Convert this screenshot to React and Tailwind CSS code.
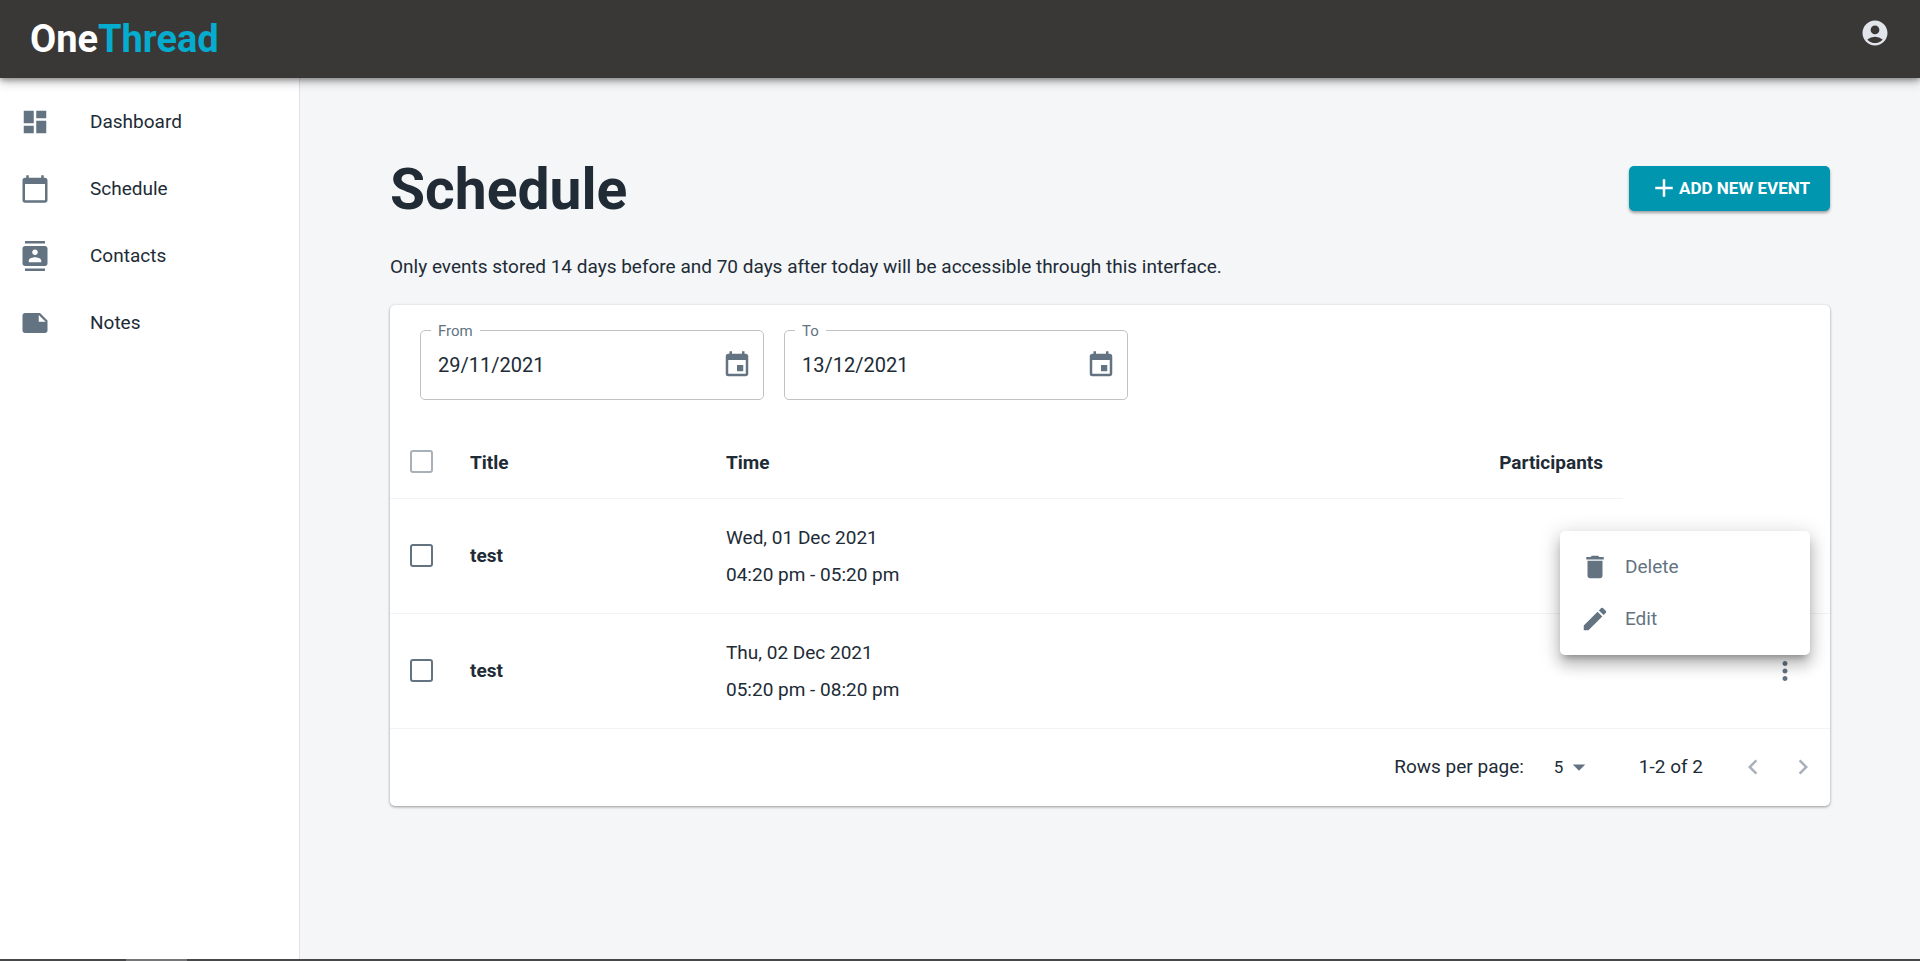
import React, { useState } from "react";
import {
    MdAccountCircle,
    MdAdd,
    MdArrowDropDown,
    MdCalendarToday,
    MdChevronLeft,
    MdChevronRight,
    MdContacts,
    MdDashboard,
    MdDelete,
    MdEdit,
    MdEvent,
    MdMoreVert,
    MdNote,
} from "react-icons/md";

const links = [
    { name: "Dashboard", icon: MdDashboard },
    { name: "Schedule", icon: MdCalendarToday },
    { name: "Contacts", icon: MdContacts },
    { name: "Notes", icon: MdNote },
];

const events = [
    { id: 1, title: "test", date: "Wed, 01 Dec 2021", time: "04:20 pm - 05:20 pm" },
    { id: 2, title: "test", date: "Thu, 02 Dec 2021", time: "05:20 pm - 08:20 pm" },
];

const Header = () => (
    <header className="relative z-10 h-[78px] px-[30px] flex items-start justify-between bg-[#3a3836] shadow-[0_2px_5px_rgba(0,0,0,0.3),0_4px_10px_rgba(0,0,0,0.25)]">
        <a href="#" className="self-center text-[38px] leading-[78px] font-bold text-white">
            One<span className="text-[#05acce]">Thread</span>
        </a>
        <button type="button" aria-label="Account" className="mt-[18px] text-[#e1e4ea]">
            <MdAccountCircle className="size-[30px]" />
        </button>
    </header>
);

const Sidebar = () => (
    <nav className="w-[300px] shrink-0 pt-[10px] bg-white border-r border-[#e0e2e5]">
        {links.map(({ name, icon: Icon }) => (
            <a key={name} href="#" className="flex items-center gap-10 h-[67px] px-5 text-[#212b36]">
                <Icon className="size-[30px] text-[#637381]" />
                {name}
            </a>
        ))}
    </nav>
);

const DateField = ({ id, label, initial }) => {
    const [value, setValue] = useState(initial);

    return (
        <div className="relative flex items-center w-[344px] h-[70px] pl-[17px] pr-[11px] border border-[#c0c2c5] rounded-[5px]">
            <label htmlFor={id} className="absolute -top-[10px] left-[10px] px-[7px] text-[15px] leading-5 bg-white text-[#637381]">
                {label}
            </label>
            <input
                id={id}
                type="text"
                value={value}
                onChange={(e) => setValue(e.target.value)}
                className="flex-1 min-w-0 bg-transparent outline-none text-xl"
            />
            <button type="button" aria-label={`Choose ${label} date`} className="text-[#637381]">
                <MdEvent className="size-[30px]" />
            </button>
        </div>
    );
};

const Checkbox = ({ label, className }) => (
    <input
        type="checkbox"
        aria-label={label}
        className={`block appearance-none size-[23px] rounded-[3px] border-2 checked:bg-[#0096b0] ${className}`}
    />
);

const RowMenu = () => (
    <div className="absolute z-10 top-[33px] right-5 w-[250px] py-[10px] bg-white rounded-[5px] text-[#637381] shadow-[0_6px_7px_-4px_rgba(0,0,0,0.3),0_10px_14px_1px_rgba(0,0,0,0.16),0_4px_20px_3px_rgba(0,0,0,0.14)]">
        <button type="button" className="flex items-center gap-[15px] w-full h-[52px] px-5">
            <MdDelete className="size-[30px]" />
            Delete
        </button>
        <button type="button" className="flex items-center gap-[15px] w-full h-[52px] px-5">
            <MdEdit className="size-[30px]" />
            Edit
        </button>
    </div>
);

const EventTable = () => {
    const [openMenu, setOpenMenu] = useState(1);

    return (
        <table className="w-full table-fixed text-left border-collapse">
            <thead>
                <tr className="h-[69px] [&>th]:border-b [&>th]:border-[#f1f3f4]">
                    <th className="w-[60px] pl-5 pb-1">
                        <Checkbox label="Select all" className="border-[#a8b1ba]" />
                    </th>
                    <th className="w-[256px] px-5 font-bold">Title</th>
                    <th className="px-5 font-bold">Time</th>
                    <th className="w-[300px] px-5 text-right font-bold">Participants</th>
                    <td className="w-[207px]"></td>
                </tr>
            </thead>
            <tbody>
                {events.map((event) => (
                    <tr key={event.id} className="relative h-[115px] border-b border-[#f1f3f4]">
                        <td className="pl-5">
                            <Checkbox label={`Select ${event.title}`} className="border-[#637381]" />
                        </td>
                        <td className="px-5 font-bold">{event.title}</td>
                        <td className="px-5 leading-[37px]">
                            <p>{event.date}</p>
                            <p>{event.time}</p>
                        </td>
                        <td></td>
                        <td className="px-[30px]">
                            <button
                                type="button"
                                aria-label="More options"
                                className="block ml-auto text-[#637381]"
                                onClick={() => setOpenMenu(openMenu === event.id ? null : event.id)}
                            >
                                <MdMoreVert className="size-[30px]" />
                            </button>
                            {openMenu === event.id && <RowMenu />}
                        </td>
                    </tr>
                ))}
            </tbody>
        </table>
    );
};

const Pagination = () => (
    <div className="flex items-center justify-end h-[77px] pr-3">
        <label htmlFor="rows">Rows per page:</label>
        <div className="relative ml-[30px] mr-[45px] text-[17px]">
            <select id="rows" defaultValue="5" className="appearance-none w-[40px] bg-transparent outline-none">
                <option>5</option>
                <option>10</option>
                <option>25</option>
            </select>
            <MdArrowDropDown className="absolute top-0 right-0 size-[30px] pointer-events-none text-[#637381]" />
        </div>
        <span>1-2 of 2</span>
        <button type="button" disabled aria-label="Previous page" className="ml-[35px] text-[#a8b1ba]">
            <MdChevronLeft className="size-[30px]" />
        </button>
        <button type="button" disabled aria-label="Next page" className="ml-5 text-[#a8b1ba]">
            <MdChevronRight className="size-[30px]" />
        </button>
    </div>
);

const App = () => {
    return (
        <div className="min-h-screen flex flex-col font-[Roboto,sans-serif] text-[19px] leading-[30px] text-[#212b36] bg-[#f4f6f8]">
            <Header />
            <div className="flex flex-1">
                <Sidebar />
                <main className="flex-1 min-w-0 px-[90px] pt-[70px]">
                    <div className="flex items-center justify-between">
                        <h1 className="pt-1 text-[57px] leading-[76px] font-bold">Schedule</h1>
                        <button
                            type="button"
                            className="flex items-center h-[45px] px-5 rounded-[5px] bg-[#0096b0] text-white text-[17px] font-bold shadow-[0_2px_3px_rgba(0,0,0,0.35)]"
                        >
                            <MdAdd className="size-[30px]" />
                            ADD NEW EVENT
                        </button>
                    </div>
                    <p className="mt-6">
                        Only events stored 14 days before and 70 days after today will be accessible through this interface.
                    </p>
                    <section className="mt-[23px] bg-white rounded-[5px] shadow-[0_1px_3px_rgba(0,0,0,0.4)]">
                        <div className="flex gap-5 px-[30px] pt-[25px] pb-[29px]">
                            <DateField id="from" label="From" initial="29/11/2021" />
                            <DateField id="to" label="To" initial="13/12/2021" />
                        </div>
                        <EventTable />
                        <Pagination />
                    </section>
                </main>
            </div>
            <footer className="h-[2px] pl-[126px] bg-[#464748]">
                <div className="w-[61px] h-full bg-[#757677]"></div>
            </footer>
        </div>
    );
};

export default App;
